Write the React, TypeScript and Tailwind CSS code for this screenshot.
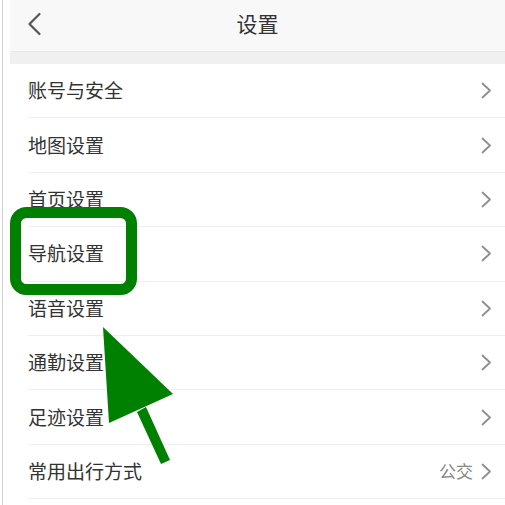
import React from 'react';

const ROWS = [
  { label: '账号与安全' },
  { label: '地图设置' },
  { label: '首页设置' },
  { label: '导航设置' },
  { label: '语音设置' },
  { label: '通勤设置' },
  { label: '足迹设置' },
  { label: '常用出行方式', value: '公交' },
];

function Chevron() {
  return (
    <svg width="11" height="17" viewBox="0 0 11 17" fill="none">
      <path d="M1.5 1.5 L9 8.5 L1.5 15.5" stroke="#8e8e8e" strokeWidth="1.8" strokeLinecap="round" strokeLinejoin="round" />
    </svg>
  );
}

export default function App() {
  return (
    <div
      className="relative flex w-[505px] h-[505px] overflow-hidden bg-white text-[#333]"
      style={{ fontFamily: '"Noto Sans CJK SC", "Noto Sans", sans-serif' }}
    >
      {/* left edge */}
      <div className="w-[2px] shrink-0" />
      <div className="w-px shrink-0 bg-[#cfcfcf]" />
      <div className="w-[7px] shrink-0" />

      <div className="flex-1 flex flex-col min-w-0">
        {/* Header */}
        <header className="h-[51px] shrink-0 bg-[#f8f8f8] flex items-center relative">
          <div className="pl-[17px] pb-[3px]">
            <svg width="15" height="24" viewBox="0 0 15 24" fill="none">
              <path d="M12.5 2 L2.5 12 L12.5 22" stroke="#555" strokeWidth="2.2" strokeLinecap="round" strokeLinejoin="round" />
            </svg>
          </div>
          <h1 className="absolute left-0 right-0 top-[13px] text-center text-[21px] leading-none pointer-events-none">设置</h1>
        </header>
        <div className="h-[13px] shrink-0 bg-[#f0f0f0] border-t border-[#e9e9e9]" />

        {/* List */}
        <div className="flex flex-col">
          {ROWS.map((row) => (
            <div key={row.label} className="h-[54.4px] pl-[18px] flex">
              <div className="flex-1 flex items-center justify-between border-b border-[#efefef] pr-[13px]">
                <span className="text-[19px] leading-none pb-[2px]">{row.label}</span>
                <div className="flex items-center gap-[8px]">
                  {row.value && <span className="text-[17px] text-[#888] leading-none pb-[2px]">{row.value}</span>}
                  <Chevron />
                </div>
              </div>
            </div>
          ))}
        </div>
      </div>

      {/* Annotation overlay */}
      <svg className="absolute inset-0 pointer-events-none" width="505" height="505" viewBox="0 0 505 505">
        <rect x="15.5" y="212.5" width="116" height="77" rx="11" fill="none" stroke="#008000" strokeWidth="11" />
        <polygon points="103,327 173,394 109,423" fill="#008000" />
        <polygon points="137,412 146,407 170,460 161,464" fill="#008000" />
      </svg>
    </div>
  );
}
